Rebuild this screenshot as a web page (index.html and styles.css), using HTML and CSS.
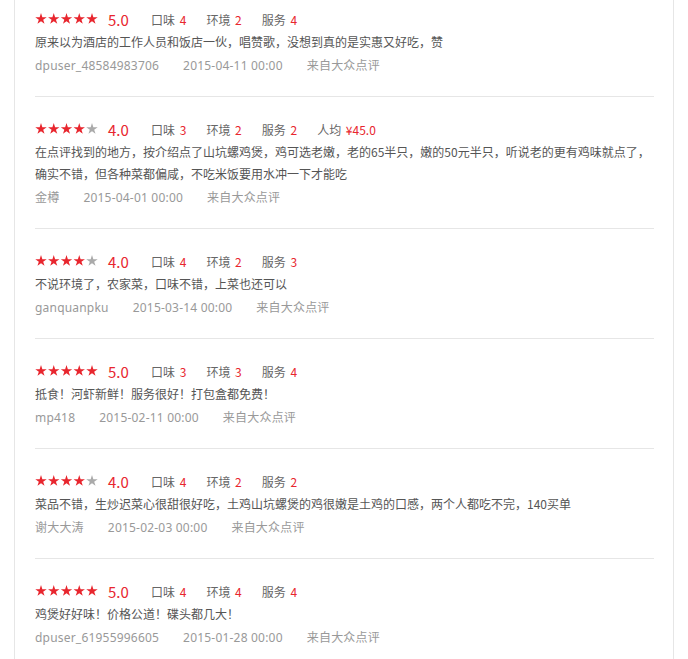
FILE: index.html
```html
<!DOCTYPE html>
<html lang="zh-CN">
<head>
    <meta charset="UTF-8">
    <title>评价</title>
    <link rel="stylesheet" href="styles.css">
</head>
<body>
    <svg width="0" height="0" class="defs">
        <symbol id="star" viewBox="0 0 12 12">
            <polygon points="6,0 7.35,4.14 11.71,4.15 8.19,6.71 9.53,10.85 6,8.3 2.47,10.85 3.81,6.71 0.29,4.15 4.65,4.14"/>
        </symbol>
    </svg>

    <div class="reviews">
        <div class="review first">
            <div class="score-row">
                <svg class="stars" width="63" height="12">
                    <use href="#star" x="0" width="12" height="12" class="on"/>
                    <use href="#star" x="12.75" width="12" height="12" class="on"/>
                    <use href="#star" x="25.5" width="12" height="12" class="on"/>
                    <use href="#star" x="38.25" width="12" height="12" class="on"/>
                    <use href="#star" x="51" width="12" height="12" class="on"/>
                </svg>
                <span class="rating">5.0</span>
                <span class="item">口味 <em>4</em></span>
                <span class="item">环境 <em>2</em></span>
                <span class="item">服务 <em>4</em></span>
            </div>
            <p class="content">原来以为酒店的工作人员和饭店一伙，唱赞歌，没想到真的是实惠又好吃，赞</p>
            <div class="meta">
                <span>dpuser_48584983706</span>
                <span>2015-04-11 00:00</span>
                <span>来自大众点评</span>
            </div>
        </div>

        <div class="review">
            <div class="score-row">
                <svg class="stars" width="63" height="12">
                    <use href="#star" x="0" width="12" height="12" class="on"/>
                    <use href="#star" x="12.75" width="12" height="12" class="on"/>
                    <use href="#star" x="25.5" width="12" height="12" class="on"/>
                    <use href="#star" x="38.25" width="12" height="12" class="on"/>
                    <use href="#star" x="51" width="12" height="12" class="off"/>
                </svg>
                <span class="rating">4.0</span>
                <span class="item">口味 <em>3</em></span>
                <span class="item">环境 <em>2</em></span>
                <span class="item">服务 <em>2</em></span>
                <span class="item">人均 <em class="price">¥45.0</em></span>
            </div>
            <p class="content">在点评找到的地方，按介绍点了山坑螺鸡煲，鸡可选老嫩，老的65半只，嫩的50元半只，听说老的更有鸡味就点了，确实不错，但各种菜都偏咸，不吃米饭要用水冲一下才能吃</p>
            <div class="meta">
                <span>金樽</span>
                <span>2015-04-01 00:00</span>
                <span>来自大众点评</span>
            </div>
        </div>

        <div class="review">
            <div class="score-row">
                <svg class="stars" width="63" height="12">
                    <use href="#star" x="0" width="12" height="12" class="on"/>
                    <use href="#star" x="12.75" width="12" height="12" class="on"/>
                    <use href="#star" x="25.5" width="12" height="12" class="on"/>
                    <use href="#star" x="38.25" width="12" height="12" class="on"/>
                    <use href="#star" x="51" width="12" height="12" class="off"/>
                </svg>
                <span class="rating">4.0</span>
                <span class="item">口味 <em>4</em></span>
                <span class="item">环境 <em>2</em></span>
                <span class="item">服务 <em>3</em></span>
            </div>
            <p class="content">不说环境了，农家菜，口味不错，上菜也还可以</p>
            <div class="meta">
                <span>ganquanpku</span>
                <span>2015-03-14 00:00</span>
                <span>来自大众点评</span>
            </div>
        </div>

        <div class="review">
            <div class="score-row">
                <svg class="stars" width="63" height="12">
                    <use href="#star" x="0" width="12" height="12" class="on"/>
                    <use href="#star" x="12.75" width="12" height="12" class="on"/>
                    <use href="#star" x="25.5" width="12" height="12" class="on"/>
                    <use href="#star" x="38.25" width="12" height="12" class="on"/>
                    <use href="#star" x="51" width="12" height="12" class="on"/>
                </svg>
                <span class="rating">5.0</span>
                <span class="item">口味 <em>3</em></span>
                <span class="item">环境 <em>3</em></span>
                <span class="item">服务 <em>4</em></span>
            </div>
            <p class="content">抵食！河虾新鲜！服务很好！打包盒都免费！</p>
            <div class="meta">
                <span>mp418</span>
                <span>2015-02-11 00:00</span>
                <span>来自大众点评</span>
            </div>
        </div>

        <div class="review">
            <div class="score-row">
                <svg class="stars" width="63" height="12">
                    <use href="#star" x="0" width="12" height="12" class="on"/>
                    <use href="#star" x="12.75" width="12" height="12" class="on"/>
                    <use href="#star" x="25.5" width="12" height="12" class="on"/>
                    <use href="#star" x="38.25" width="12" height="12" class="on"/>
                    <use href="#star" x="51" width="12" height="12" class="off"/>
                </svg>
                <span class="rating">4.0</span>
                <span class="item">口味 <em>4</em></span>
                <span class="item">环境 <em>2</em></span>
                <span class="item">服务 <em>2</em></span>
            </div>
            <p class="content">菜品不错，生炒迟菜心很甜很好吃，土鸡山坑螺煲的鸡很嫩是土鸡的口感，两个人都吃不完，140买单</p>
            <div class="meta">
                <span>谢大大涛</span>
                <span>2015-02-03 00:00</span>
                <span>来自大众点评</span>
            </div>
        </div>

        <div class="review">
            <div class="score-row">
                <svg class="stars" width="63" height="12">
                    <use href="#star" x="0" width="12" height="12" class="on"/>
                    <use href="#star" x="12.75" width="12" height="12" class="on"/>
                    <use href="#star" x="25.5" width="12" height="12" class="on"/>
                    <use href="#star" x="38.25" width="12" height="12" class="on"/>
                    <use href="#star" x="51" width="12" height="12" class="on"/>
                </svg>
                <span class="rating">5.0</span>
                <span class="item">口味 <em>4</em></span>
                <span class="item">环境 <em>4</em></span>
                <span class="item">服务 <em>4</em></span>
            </div>
            <p class="content">鸡煲好好味！价格公道！碟头都几大！</p>
            <div class="meta">
                <span>dpuser_61955996605</span>
                <span>2015-01-28 00:00</span>
                <span>来自大众点评</span>
            </div>
        </div>
    </div>
</body>
</html>
```

FILE: styles.css
```css
body {
    margin: 0;
    background-color: #fff;
    font-family: "Noto Sans CJK SC", "Noto Sans", sans-serif;
    font-size: 12px;
    color: #555;
}

.defs {
    position: absolute;
}

.reviews {
    width: 619px;
    margin-left: 14px;
    padding: 0 19px 0 20px;
    border-left: 1px solid #e6e6e6;
    border-right: 1px solid #e6e6e6;
    min-height: 659px;
}

.review {
    padding: 20px 0 19px;
    border-bottom: 1px solid #e6e6e6;
}

.review.first {
    padding-top: 7px;
}

.score-row {
    display: flex;
    align-items: center;
    height: 24px;
    color: #666;
}

.stars {
    display: block;
    margin-right: 10px;
}

.stars .on {
    fill: #e8262e;
}

.stars .off {
    fill: #aaa;
}

.rating {
    font-size: 15px;
    color: #e8262e;
    margin-right: 24px;
    width: 19px;
}

.item {
    margin-right: 20px;
}

.item em {
    font-style: normal;
    color: #e8262e;
    margin-left: 2px;
}

.content {
    margin: 0;
    line-height: 22px;
}

.meta {
    display: flex;
    gap: 24px;
    padding-top: 2px;
    line-height: 22px;
    color: #999;
    letter-spacing: 0.2px;
    font-family: "Noto Sans", "Noto Sans CJK SC", sans-serif;
}
```
